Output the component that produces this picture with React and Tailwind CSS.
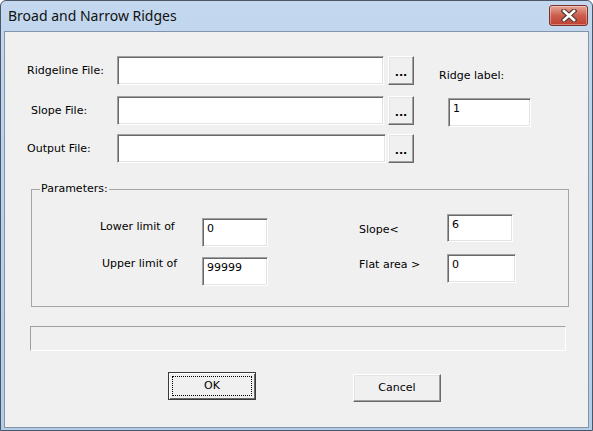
import React from "react";

const sunken =
  "bg-white border border-t-[#a0a0a0] border-l-[#a0a0a0] border-b-white border-r-white shadow-[inset_1px_1px_0_#696969,inset_-1px_-1px_0_#e3e3e3] pl-[4px] pt-[3px] text-[11px] leading-[14px]";
const raised =
  "bg-[#f0f0f0] border border-t-white border-l-white border-b-[#696969] border-r-[#696969] shadow-[inset_-1px_-1px_0_#a0a0a0,inset_1px_1px_0_#e3e3e3] flex items-center justify-center";

const FileRow = ({ label, labelPad, inputW, gap, children }) => (
  <div className="flex items-center h-[29px]">
    <div className={`w-[90px] ${labelPad}`}>{label}</div>
    <div className={`${sunken} ${inputW} h-[29px]`} />
    <div className={`${raised} ${gap} w-[26px] h-[29px] pt-[5px] font-bold`}>...</div>
    {children}
  </div>
);

export default function App() {
  return (
    <div className="w-[593px] h-[431px] flex flex-col border border-[#4a5566] rounded-t-[6px] bg-gradient-to-b from-[#c3d8ef] via-[#b9d1ea] to-[#b3cde6] overflow-hidden">
      {/* title bar */}
      <div className="h-[30px] flex items-start">
        <div className="pl-[7px] pt-[5px] text-[14px] leading-[20px] text-[#111] font-['Noto_Sans',sans-serif] flex-1">
          Broad and Narrow Ridges
        </div>
        <div className="mt-[4px] mr-[4px] w-[39px] h-[21px] rounded-[3px] border border-[#7a3229] bg-gradient-to-b from-[#e6a797] via-[#cb5e4f] to-[#c03f2d] shadow-[inset_0_0_0_1px_rgba(255,255,255,0.35)] flex items-center justify-center">
          <svg width="16" height="13" viewBox="0 0 16 13">
            <path d="M3 2 L13 11 M13 2 L3 11" stroke="#5b3a36" strokeWidth="5" strokeLinecap="square" />
            <path d="M3 2 L13 11 M13 2 L3 11" stroke="#ffffff" strokeWidth="2.6" strokeLinecap="square" />
          </svg>
        </div>
      </div>

      {/* client area */}
      <div className="flex-1 mx-[3px] mb-[2px] border border-[#8394aa] bg-[#f0f0f0] text-black font-['DejaVu_Sans',sans-serif] text-[11px] leading-[14px] flex flex-col">
        <div className="pl-[22px] pt-[24px] flex flex-col">
          <FileRow label="Ridgeline File:" labelPad="" inputW="w-[267px]" gap="ml-[4px]">
            <div className="ml-[25px] self-start mt-[13px]">Ridge label:</div>
          </FileRow>
          <div className="mt-[11px]">
            <FileRow label="Slope File:" labelPad="pl-[4px]" inputW="w-[267px]" gap="ml-[4px]">
              <div className={`${sunken} ml-[34px] self-start mt-[2px] w-[83px] h-[29px]`}>1</div>
            </FileRow>
          </div>
          <div className="mt-[9px]">
            <FileRow label="Output File:" labelPad="" inputW="w-[269px]" gap="ml-[2px]" />
          </div>
        </div>

        <fieldset className="ml-[26px] mt-[19px] w-[538px] h-[125px] border border-[#a5a5a5] flex">
          <legend className="ml-[8px] px-[1px] leading-[14px]">Parameters:</legend>
          <div className="flex items-start">
            <div className="ml-[68px] mt-[22px] flex flex-col">
              <div className="flex items-start h-[29px]">
                <div className="w-[102px] mt-[2px]">Lower limit of</div>
                <div className={`${sunken} w-[66px] h-[29px]`}>0</div>
              </div>
              <div className="flex items-start h-[29px] mt-[10px]">
                <div className="w-[102px] pl-[2px]">Upper limit of</div>
                <div className={`${sunken} w-[66px] h-[29px]`}>99999</div>
              </div>
            </div>
            <div className="ml-[91px] mt-[18px] flex flex-col">
              <div className="flex items-start h-[28px]">
                <div className="w-[88px] mt-[9px]">Slope&lt;</div>
                <div className={`${sunken} w-[66px] h-[28px]`}>6</div>
              </div>
              <div className="flex items-start h-[29px] mt-[12px]">
                <div className="w-[88px] mt-[4px]">Flat area &gt;</div>
                <div className={`${sunken} w-[69px] h-[29px]`}>0</div>
              </div>
            </div>
          </div>
        </fieldset>

        {/* progress bar */}
        <div className="ml-[25px] mt-[19px] w-[536px] h-[25px] border border-t-[#a0a0a0] border-l-[#a0a0a0] border-b-white border-r-white bg-[#f0f0f0]" />

        <div className="flex items-start mt-[21px]">
          <div className="ml-[163px] w-[88px] h-[28px] border border-[#3a3a3a] bg-[#f0f0f0] shadow-[inset_1px_1px_0_#fff,inset_-1px_-1px_0_#696969] p-[3px]">
            <div className="h-full border border-dotted border-black flex items-center justify-center">OK</div>
          </div>
          <div className={`${raised} ml-[97px] mt-[2px] w-[88px] h-[28px]`}>Cancel</div>
        </div>
      </div>
    </div>
  );
}
